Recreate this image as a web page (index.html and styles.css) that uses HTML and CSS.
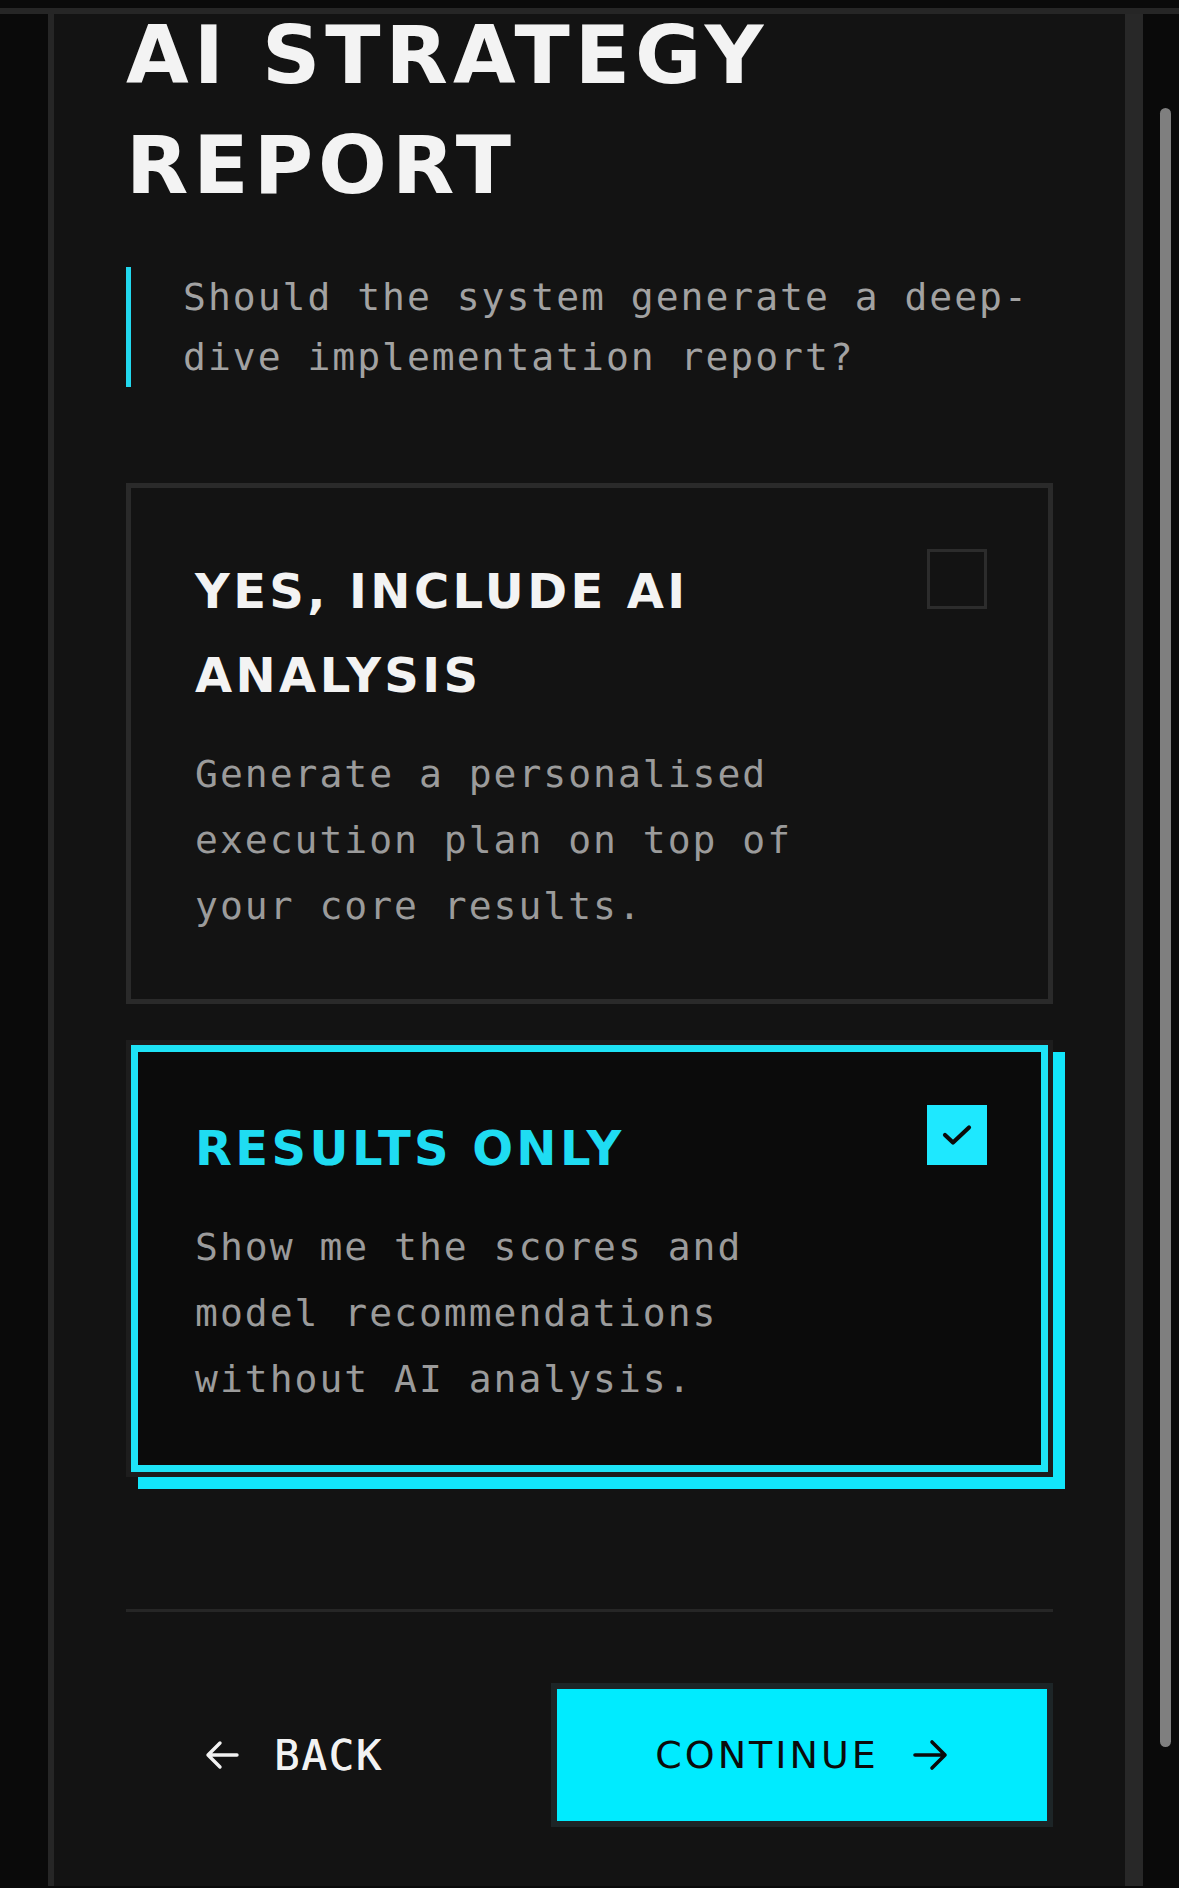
FILE: index.html
```html
<!DOCTYPE html>
<html lang="en">

<head>
  <meta charset="UTF-8">
  <meta name="viewport" content="width=device-width, initial-scale=1.0">
  <title>AI Strategy Report</title>

  <link rel="stylesheet" href="styles.css">
</head>

<body>
  <div class="topbar"></div>

  <div class="frame">
    <div class="gutter"></div>

    <main class="panel">
      <h1 class="title">AI STRATEGY REPORT</h1>

      <p class="question">Should the system generate a deep-dive implementation report?</p>

      <div class="options">
        <div class="option">
          <div class="option-text">
            <h2 class="option-title">YES, INCLUDE AI ANALYSIS</h2>
            <p class="option-desc">Generate a personalised execution plan on top of your core results.</p>
          </div>
          <span class="check"></span>
        </div>

        <div class="option selected">
          <div class="option-text">
            <h2 class="option-title">RESULTS ONLY</h2>
            <p class="option-desc">Show me the scores and model recommendations without AI analysis.</p>
          </div>
          <span class="check">
            <svg width="30" height="22" viewBox="0 0 30 22">
              <path d="M3 11 L11 18.5 L27 3.5" fill="none" stroke="#0b0b0b" stroke-width="4.2" stroke-linecap="round" stroke-linejoin="round"/>
            </svg>
          </span>
        </div>
      </div>

      <div class="divider"></div>

      <div class="actions">
        <button class="back">
          <svg width="34" height="30" viewBox="0 0 34 30">
            <path d="M32 15 H3 M15 3 L3 15 L15 27" fill="none" stroke="#f2f2f2" stroke-width="3.4" stroke-linecap="round" stroke-linejoin="round"/>
          </svg>
          <span>BACK</span>
        </button>
        <button class="continue">
          <span>CONTINUE</span>
          <svg width="36" height="32" viewBox="0 0 36 32">
            <path d="M2 16 H32 M19 3 L32 16 L19 29" fill="none" stroke="#0b0b0b" stroke-width="3.6" stroke-linecap="round" stroke-linejoin="round"/>
          </svg>
        </button>
      </div>
    </main>

    <div class="rail">
      <div class="thumb"></div>
    </div>
  </div>
</body>

</html>
```

FILE: styles.css
```css
html {
  background-color: #0a0a0a;
}

body {
  margin: 0;
  height: 1888px;
  overflow: hidden;
  background-color: #0a0a0a;
  font-family: "DejaVu Sans", sans-serif;
  color: #f2f2f2;
}

.topbar {
  position: relative;
  z-index: 1;
  height: 8px;
  background-color: #0a0a0a;
  border-bottom: 6px solid #262626;
}

.frame {
  display: flex;
  height: 1872px;
}

.gutter {
  width: 48px;
  background-color: #0a0a0a;
}

.panel {
  width: 927px;
  padding: 0 72px;
  background-color: #131313;
  border-left: 6px solid #262626;
  border-right: 18px solid #282828;
}

.title {
  margin: -14px 0 0 0;
  font-size: 81px;
  font-weight: 700;
  line-height: 110px;
  letter-spacing: 5px;
  color: #f3f3f3;
}

.question {
  margin: 47px 0 0 0;
  padding-left: 52px;
  border-left: 5px solid #22d8ee;
  font-family: "DejaVu Sans Mono", monospace;
  font-size: 38px;
  line-height: 60px;
  letter-spacing: 2px;
  color: #a2a2a2;
}

.options {
  margin-top: 96px;
  display: flex;
  flex-direction: column;
  gap: 36px;
}

.option {
  display: flex;
  align-items: flex-start;
  gap: 48px;
  padding: 61px 61px 60px 64px;
  border: 5px solid #2a2a2a;
  background-color: #131313;
}

.option-text {
  flex: 1;
}

.option-title {
  margin: 0;
  font-size: 48px;
  font-weight: 700;
  line-height: 84px;
  letter-spacing: 3.4px;
  color: #f3f3f3;
}

.option-desc {
  margin: 24px 0 0 0;
  font-family: "DejaVu Sans Mono", monospace;
  font-size: 38px;
  line-height: 66px;
  letter-spacing: 2px;
  color: #9b9b9b;
}

.check {
  flex: none;
  width: 60px;
  height: 60px;
  box-sizing: border-box;
  border: 3px solid #2c2c2c;
  display: flex;
  align-items: center;
  justify-content: center;
}

.option.selected {
  background-color: #0b0b0b;
  border-color: #1d1d1d;
  box-shadow: inset 0 0 0 7px #1ee4f7, 12px 12px 0 #12e6fb;
}

.option.selected .option-title {
  color: #1fdcf2;
}

.option.selected .check {
  margin-top: -1px;
  border: none;
  background-color: #1ee8ff;
}

.divider {
  margin-top: 132px;
  height: 3px;
  background-color: #262626;
}

.actions {
  padding-top: 71px;
  display: flex;
  justify-content: space-between;
  align-items: center;
}

button {
  font: inherit;
  cursor: pointer;
}

.back {
  height: 144px;
  padding: 0 0 0 79px;
  background: none;
  border: none;
  display: flex;
  align-items: center;
  gap: 35px;
  font-family: "DejaVu Sans Mono", monospace;
  font-size: 42px;
  letter-spacing: 2px;
  color: #f2f2f2;
  text-shadow: 0.6px 0 0 #f2f2f2;
}

.continue {
  width: 502px;
  height: 144px;
  box-sizing: border-box;
  border: 6px solid #1d2527;
  background-color: #00ebff;
  display: flex;
  align-items: center;
  justify-content: center;
  gap: 34px;
  font-size: 38px;
  letter-spacing: 3px;
  color: #0b0b0b;
}

.rail {
  flex: 1;
  padding: 94px 0 0 17px;
  background-color: #0a0a0a;
}

.thumb {
  width: 11px;
  height: 1639px;
  border-radius: 6px;
  background-color: #7f7f7f;
}
```
